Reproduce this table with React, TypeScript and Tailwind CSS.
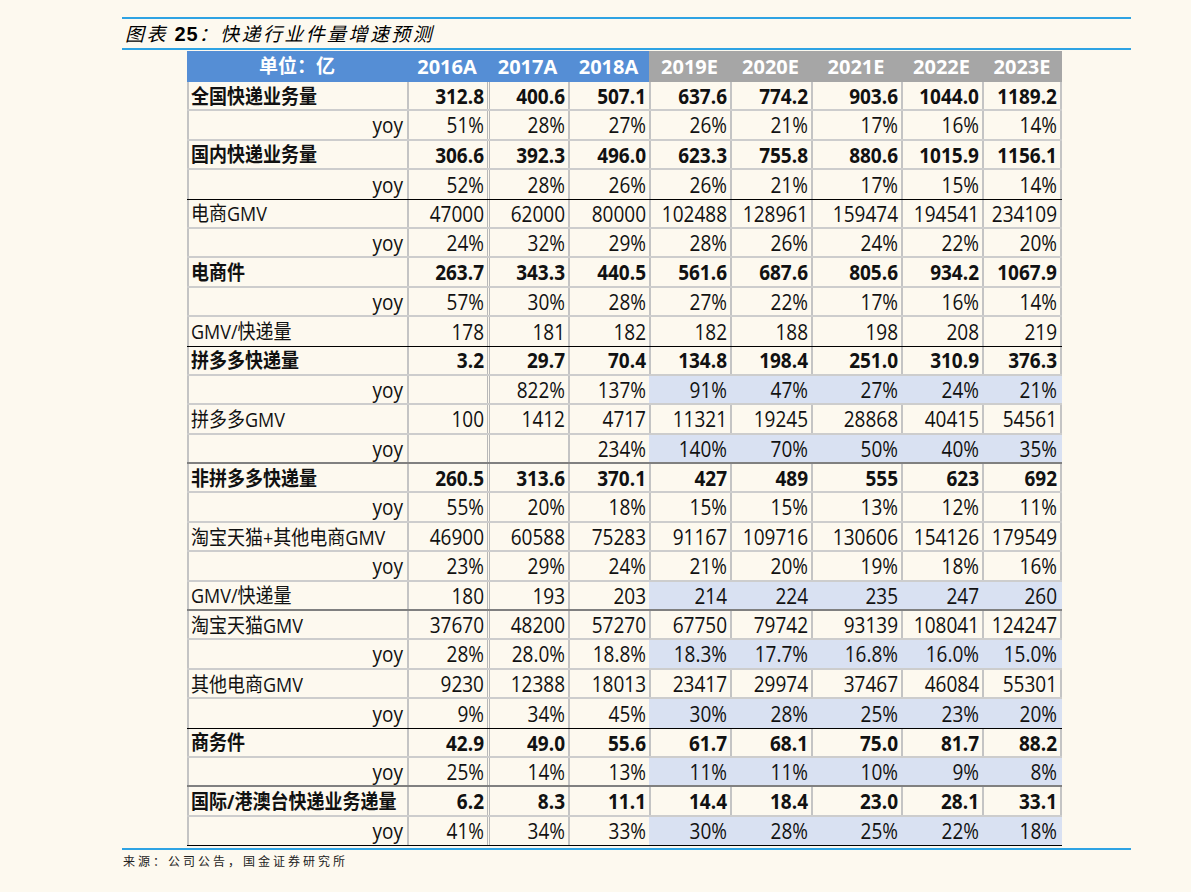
import React from "react";

type Row = {
  label: string;
  bold?: boolean;
  yoy?: boolean;
  vals: string[];
  blue?: boolean;
  bottom?: "black" | "dark";
};

const rows: Row[] = [
  { label: "全国快递业务量", bold: true, vals: ["312.8", "400.6", "507.1", "637.6", "774.2", "903.6", "1044.0", "1189.2"] },
  { label: "yoy", yoy: true, vals: ["51%", "28%", "27%", "26%", "21%", "17%", "16%", "14%"] },
  { label: "国内快递业务量", bold: true, vals: ["306.6", "392.3", "496.0", "623.3", "755.8", "880.6", "1015.9", "1156.1"] },
  { label: "yoy", yoy: true, vals: ["52%", "28%", "26%", "26%", "21%", "17%", "15%", "14%"], bottom: "black" },
  { label: "电商GMV", vals: ["47000", "62000", "80000", "102488", "128961", "159474", "194541", "234109"] },
  { label: "yoy", yoy: true, vals: ["24%", "32%", "29%", "28%", "26%", "24%", "22%", "20%"] },
  { label: "电商件", bold: true, vals: ["263.7", "343.3", "440.5", "561.6", "687.6", "805.6", "934.2", "1067.9"] },
  { label: "yoy", yoy: true, vals: ["57%", "30%", "28%", "27%", "22%", "17%", "16%", "14%"] },
  { label: "GMV/快递量", vals: ["178", "181", "182", "182", "188", "198", "208", "219"], bottom: "black" },
  { label: "拼多多快递量", bold: true, vals: ["3.2", "29.7", "70.4", "134.8", "198.4", "251.0", "310.9", "376.3"] },
  { label: "yoy", yoy: true, blue: true, vals: ["", "822%", "137%", "91%", "47%", "27%", "24%", "21%"] },
  { label: "拼多多GMV", vals: ["100", "1412", "4717", "11321", "19245", "28868", "40415", "54561"] },
  { label: "yoy", yoy: true, blue: true, vals: ["", "", "234%", "140%", "70%", "50%", "40%", "35%"], bottom: "dark" },
  { label: "非拼多多快递量", bold: true, vals: ["260.5", "313.6", "370.1", "427", "489", "555", "623", "692"] },
  { label: "yoy", yoy: true, vals: ["55%", "20%", "18%", "15%", "15%", "13%", "12%", "11%"] },
  { label: "淘宝天猫+其他电商GMV", vals: ["46900", "60588", "75283", "91167", "109716", "130606", "154126", "179549"] },
  { label: "yoy", yoy: true, vals: ["23%", "29%", "24%", "21%", "20%", "19%", "18%", "16%"] },
  { label: "GMV/快递量", blue: true, vals: ["180", "193", "203", "214", "224", "235", "247", "260"], bottom: "dark" },
  { label: "淘宝天猫GMV", vals: ["37670", "48200", "57270", "67750", "79742", "93139", "108041", "124247"] },
  { label: "yoy", yoy: true, blue: true, vals: ["28%", "28.0%", "18.8%", "18.3%", "17.7%", "16.8%", "16.0%", "15.0%"] },
  { label: "其他电商GMV", vals: ["9230", "12388", "18013", "23417", "29974", "37467", "46084", "55301"] },
  { label: "yoy", yoy: true, blue: true, vals: ["9%", "34%", "45%", "30%", "28%", "25%", "23%", "20%"], bottom: "black" },
  { label: "商务件", bold: true, vals: ["42.9", "49.0", "55.6", "61.7", "68.1", "75.0", "81.7", "88.2"] },
  { label: "yoy", yoy: true, blue: true, vals: ["25%", "14%", "13%", "11%", "11%", "10%", "9%", "8%"], bottom: "dark" },
  { label: "国际/港澳台快递业务递量", bold: true, vals: ["6.2", "8.3", "11.1", "14.4", "18.4", "23.0", "28.1", "33.1"] },
  { label: "yoy", yoy: true, blue: true, vals: ["41%", "34%", "33%", "30%", "28%", "25%", "22%", "18%"], bottom: "black" },
];

const colW = ["w-[80px]", "w-[81px]", "w-[81px]", "w-[81px]", "w-[81px]", "w-[90px]", "w-[81px]", "w-[80px]"];
const years = ["2016A", "2017A", "2018A", "2019E", "2020E", "2021E", "2022E", "2023E"];

function DataRow({ r }: { r: Row }) {
  const bottom =
    r.bottom === "black"
      ? "border-b-[1.5px] border-b-black"
      : r.bottom === "dark"
      ? "border-b-2 border-b-[#808080]"
      : "border-b-2 border-b-[#cdcdcd]";
  return (
    <div className={`flex h-[29.4px] box-border ${bottom}`}>
      <div
        className={`w-[220px] shrink-0 flex items-center border-l-2 border-l-[#c4c4c4] ${
          r.yoy ? "justify-end pr-[4px] text-[19px]" : "pl-[2px] text-[18px]"
        } ${r.bold ? "font-bold" : ""}`}
      >
        <span className="inline-block scale-y-[1.12] pt-[1px]">{r.label}</span>
      </div>
      {r.vals.map((v, i) => {
        const isBlue = r.blue && i >= 3;
        const border = isBlue
          ? "border-l-2 border-l-[#d9e1f2] bg-[#d9e1f2]"
          : i === 1
          ? "border-l-[3px] border-double border-l-[#b8b8b8]"
          : "border-l-2 border-l-[#c4c4c4]";
        const right = i === 7 ? (isBlue ? "border-r-2 border-r-[#d9e1f2]" : "border-r-2 border-r-[#c4c4c4]") : "";
        return (
          <div
            key={i}
            className={`${colW[i]} shrink-0 flex items-center justify-end pr-[3px] text-[19px] ${border} ${right} ${
              r.bold ? "font-bold" : ""
            }`}
          >
            <span className="inline-block scale-y-[1.12] pt-[1px]">{v}</span>
          </div>
        );
      })}
    </div>
  );
}

export default function App() {
  return (
    <div className="min-h-[892px] w-full bg-[#fdf9ef] text-[#111] font-['Open_Sans','Noto_Sans_CJK_SC',sans-serif]">
      <div className="pt-[17px] pl-[122px] w-[1131px]">
        <div className="h-[2px] bg-[#2ea3e3]" />
        <div className="h-[29px] flex items-center pl-[3px] text-[19px] tracking-[2.4px] text-black font-['Noto_Sans_CJK_SC',sans-serif]">
          <span className="italic">图表&nbsp;</span>
          <span className="font-bold font-['Liberation_Sans',sans-serif] text-[20px] tracking-[1px]">25</span>
          <span className="italic">：快递行业件量增速预测</span>
        </div>
        <div className="h-[2px] bg-[#2ea3e3]" />
        <div className="pl-[65px] pt-[1px]">
          <div className="w-[875px]">
            <div className="flex h-[31px] text-white font-bold text-[20px]">
              <div className="w-[220px] shrink-0 flex items-center justify-center bg-[#558ed5] text-[19px]">单位：亿</div>
              {years.map((y, i) => (
                <div
                  key={y}
                  className={`${colW[i]} shrink-0 flex items-center justify-center ${
                    i < 3 ? "bg-[#558ed5]" : "bg-[#a6a6a6]"
                  }`}
                >
                  {y}
                </div>
              ))}
            </div>
            {rows.map((r, i) => (
              <DataRow key={i} r={r} />
            ))}
          </div>
        </div>
        <div className="h-[2px] bg-[#2ea3e3] mt-[2px]" />
        <div className="h-[22px] flex items-center pl-[1px] text-[12px] tracking-[3px] text-[#222] font-['Noto_Sans_CJK_SC',sans-serif]">
          来源：公司公告，国金证券研究所
        </div>
      </div>
    </div>
  );
}
